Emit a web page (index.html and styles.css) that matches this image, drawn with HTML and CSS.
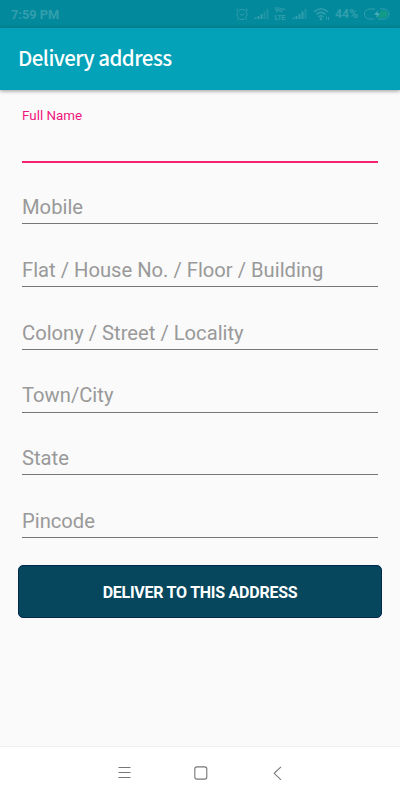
FILE: index.html
```html
<!DOCTYPE html>
<html lang="en">
<head>
    <meta charset="UTF-8">
    <meta name="viewport" content="width=device-width, initial-scale=1.0">
    <title>Delivery address</title>
    <link rel="stylesheet" href="styles.css">
</head>
<body>
    <div class="screen">
        <div class="status-bar">
            <span class="clock">7:59 PM</span>
            <div class="status-icons">
                <svg class="alarm" width="14" height="14" viewBox="0 0 14 14">
                    <circle cx="7" cy="7.5" r="5"/>
                    <path d="M1 3.5L3.5 1.5M13 3.5L10.5 1.5M4.7 6.5L7 8.5L9.3 6.5M3 12L2 13M11 12L12 13"/>
                </svg>
                <svg class="signal" width="16" height="12" viewBox="0 0 16 12">
                    <path d="M1.5 11V9.5M4.5 11V8M7.5 11V6"/>
                    <path class="weak" d="M10.5 11V3.5M13.5 11V1"/>
                </svg>
                <div class="volte"><span>Vo•</span><span>LTE</span></div>
                <svg class="signal" width="16" height="12" viewBox="0 0 16 12">
                    <path d="M1.5 11V9.5M4.5 11V8M7.5 11V6M10.5 11V3.5"/>
                    <path class="weak" d="M13.5 11V1"/>
                </svg>
                <svg class="wifi" width="17" height="14" viewBox="0 0 17 14">
                    <path d="M1 5Q8 -1.5 15 5M3.3 7.5Q8 3.3 12.7 7.5M5.6 9.8Q8 7.7 10.4 9.8"/>
                    <circle cx="8" cy="12" r="0.6"/>
                    <path class="thin" d="M13.5 9.5V12.5M15.5 10V13"/>
                </svg>
                <span class="percent">44%</span>
                <svg class="battery" width="27" height="12" viewBox="0 0 27 12">
                    <path class="charge" d="M18 2.5H21A3.5 3.5 0 0 1 21 9.5H14Z"/>
                    <path d="M12 1H6.5A5 5 0 0 0 6.5 11H11M17 1H21A5 5 0 0 1 21 11H15"/>
                    <path class="bolt" d="M15.5 1.5L10.5 7H13.5L12.5 11L17.5 5H14.5Z"/>
                </svg>
            </div>
        </div>

        <header class="app-bar">
            <h1>Delivery address</h1>
        </header>

        <main class="address-form">
            <div class="field focused"><span>Full Name</span></div>
            <div class="field mobile"><span>Mobile</span></div>
            <div class="field"><span>Flat / House No. / Floor / Building</span></div>
            <div class="field"><span>Colony / Street / Locality</span></div>
            <div class="field"><span>Town/City</span></div>
            <div class="field"><span>State</span></div>
            <div class="field"><span>Pincode</span></div>
            <button class="deliver">DELIVER TO THIS ADDRESS</button>
        </main>

        <nav class="nav-bar">
            <svg width="14" height="14" viewBox="0 0 14 14"><path d="M1.5 1.5H13.5M1.5 6.5H13.5M1.5 11.5H13.5"/></svg>
            <svg width="14" height="14" viewBox="0 0 14 14"><rect x="0.8" y="0.9" width="12" height="12.2" rx="2.2"/></svg>
            <svg width="14" height="14" viewBox="0 0 14 14"><path d="M11 0.8L4.2 7.3L11 13.8"/></svg>
        </nav>
    </div>
</body>
</html>
```
FILE: styles.css
```css
* {
    box-sizing: border-box;
}

body {
    margin: 0;
    font-family: Roboto, sans-serif;
    background: #fafafa;
}

.screen {
    display: flex;
    flex-direction: column;
    height: 800px;
    overflow: hidden;
}

.status-bar {
    display: flex;
    justify-content: space-between;
    align-items: center;
    height: 28px;
    padding: 0 10px 0 11px;
    background: #02899b;
    color: #329fae;
    font-size: 12.3px;
    font-weight: 700;
}

.clock {
    font-size: 12.8px;
}

.status-icons {
    display: flex;
    align-items: center;
    gap: 4.8px;
}

.status-icons svg {
    fill: none;
    stroke: #329fae;
}

.status-icons .signal {
    stroke-width: 2;
}

.status-icons .weak {
    stroke: #1d94a5;
}

.status-icons .wifi {
    stroke-width: 1.6;
}

.status-icons .thin {
    stroke-width: 1;
}

.status-icons .charge {
    fill: #129b86;
    stroke: none;
}

.status-icons .bolt {
    fill: #4daebb;
    stroke: #02899b;
    stroke-width: 0.5;
}

.volte {
    display: flex;
    flex-direction: column;
    width: 13px;
    font-size: 7px;
    line-height: 8.5px;
    letter-spacing: -0.2px;
}

.app-bar {
    display: flex;
    align-items: center;
    height: 62px;
    padding: 0 18px 4px;
    background: #03a2b9;
    box-shadow: 0 1px 4px rgba(0,0,0,0.4);
}

h1 {
    margin: 0;
    font-family: "Noto Sans CJK SC", sans-serif;
    font-size: 20.5px;
    font-weight: 500;
    letter-spacing: -0.55px;
    line-height: 30px;
    color: #fff;
}

.address-form {
    display: flex;
    flex-direction: column;
    flex: 1;
    padding: 9.4px 18px 0;
}

.field {
    height: 62.75px;
    margin: 0 4px;
    padding-top: 33.6px;
    border-bottom: 1px solid #777;
    font-size: 20.2px;
    line-height: 24px;
    color: #999;
}

.focused {
    height: 63.4px;
    padding-top: 8.6px;
    border-bottom: 2px solid #f5226f;
    font-size: 13.4px;
    line-height: 16px;
    color: #f0147d;
}

.mobile {
    height: 61.6px;
    padding-top: 32.4px;
}

.deliver {
    height: 53px;
    margin-top: 26.9px;
    padding: 2px 0 0;
    border: 1px solid #02284a;
    border-radius: 5px;
    background: #06475d;
    color: #fff;
    font-family: Roboto, sans-serif;
    font-size: 16px;
    font-weight: 700;
    letter-spacing: -0.25px;
}

.nav-bar {
    display: flex;
    justify-content: center;
    align-items: center;
    gap: 62.5px;
    height: 54px;
    padding: 0 0 1px 1px;
    border-top: 1px solid #f0f0f0;
    background: #fff;
}

.nav-bar svg {
    fill: none;
    stroke: #777;
    stroke-width: 1.1;
}
```
